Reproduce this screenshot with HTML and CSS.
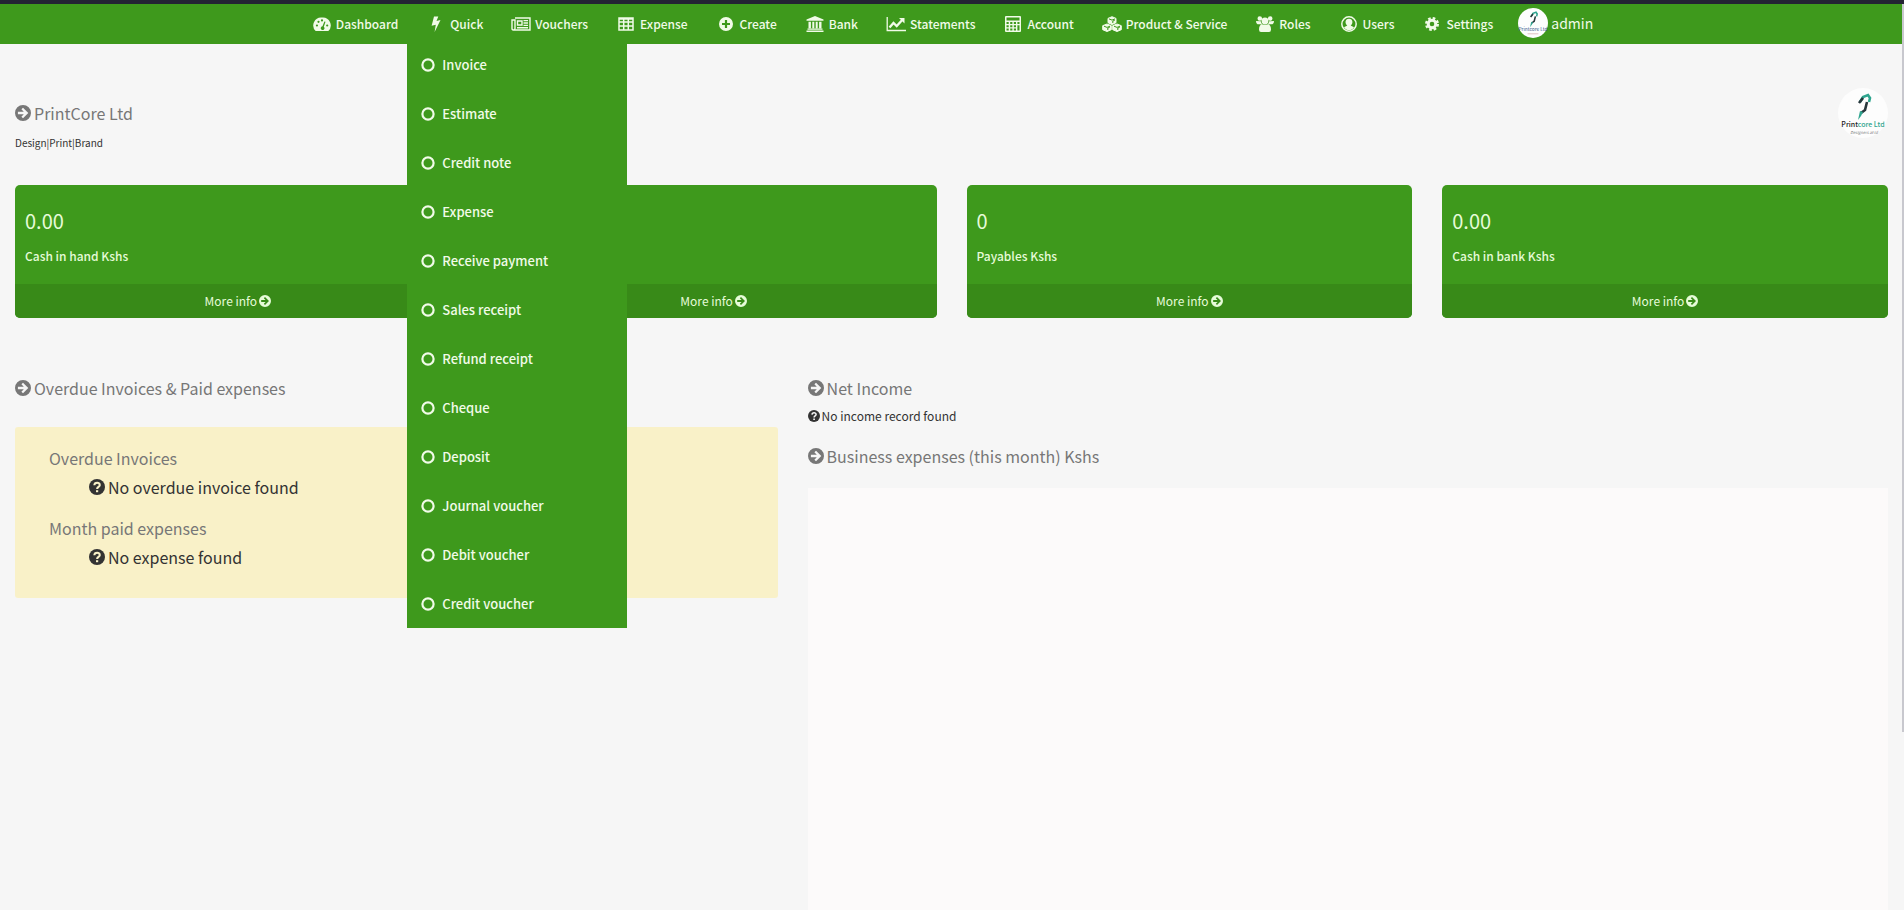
FILE: index.html
```html
<!DOCTYPE html>
<html lang="en">
<head>
<meta charset="utf-8">
<title>PrintCore Ltd</title>
<link rel="stylesheet" href="styles.css">
</head>
<body>
<svg class="defs" aria-hidden="true">
  <symbol id="arrow" viewBox="0 0 16 16"><path fill-rule="evenodd" fill="currentColor" d="M8 0a8 8 0 1 0 0 16A8 8 0 0 0 8 0ZM8 2.7l5.3 5.3L8 13.3 6.4 11.7 8.8 9.2H2.9V6.8h5.9L6.4 4.3Z"/></symbol>
  <symbol id="question" viewBox="0 0 16 16"><circle cx="8" cy="8" r="8" fill="currentColor"/><path d="M5.3 6.2C5.5 3 10.9 3 10.8 6.1 10.7 8 8.1 7.9 8.1 10" fill="none" stroke="var(--hole)" stroke-width="2"/><path d="M7 11.2h2.2v2H7Z" fill="var(--hole)"/></symbol>
  <symbol id="ring" viewBox="0 0 14 14"><circle cx="7" cy="7" r="5.6" fill="none" stroke="currentColor" stroke-width="2.2"/></symbol>
  <symbol id="brand" viewBox="0 0 50 50"><circle cx="25" cy="25" r="25" fill="#fdfdfd"/><path d="M22 14l3-5 5-2 2 3-1 4" fill="none" stroke="#2fa58f" stroke-width="2.6"/><path d="M21 15l4-5M29 14l-2 8-4 3" fill="none" stroke="#27363b" stroke-width="2.6"/><path d="M22 23l-2 9 3-4 2-4Z" fill="#2fa58f"/></symbol>
</svg>
<header class="topbar">
  <nav class="nav" aria-label="Main">
    <a class="nav-item" href="#"><svg class="icon" viewBox="0 0 20 16"><path fill="currentColor" fill-rule="evenodd" d="M3.7 15A7.9 7.9 0 0 1 10 1.500a7.9 7.9 0 0 1 6.300 13.500ZM5 8.4a1.1 1.1 0 1 0-.1 2.2A1.1 1.1 0 0 0 5 8.4ZM6.5 4.7a1.1 1.1 0 1 0 0 2.2 1.1 1.1 0 0 0 0-2.2ZM10 3.3a1.1 1.1 0 1 0 0 2.2 1.1 1.1 0 0 0 0-2.2ZM15.2 8.4a1.1 1.1 0 1 0 0 2.2 1.1 1.1 0 0 0 0-2.2ZM12.4 5.4l-1.9 4.9a1.9 1.9 0 1 0 1.3.4l1.7-4.9Z"/></svg>Dashboard</a>
    <div class="nav-group">
      <a class="nav-item" href="#" aria-expanded="true"><svg class="icon" viewBox="0 0 20 16"><path fill="currentColor" d="M8 .5h4.3L10.5 5l4-.9L8.6 16l1.2-7.3-4.2 1Z"/></svg>Quick</a>
      <div class="dropdown">
        <a class="drop-item" href="#"><svg class="ring"><use href="#ring"/></svg>Invoice</a>
        <a class="drop-item" href="#"><svg class="ring"><use href="#ring"/></svg>Estimate</a>
        <a class="drop-item" href="#"><svg class="ring"><use href="#ring"/></svg>Credit note</a>
        <a class="drop-item" href="#"><svg class="ring"><use href="#ring"/></svg>Expense</a>
        <a class="drop-item" href="#"><svg class="ring"><use href="#ring"/></svg>Receive payment</a>
        <a class="drop-item" href="#"><svg class="ring"><use href="#ring"/></svg>Sales receipt</a>
        <a class="drop-item" href="#"><svg class="ring"><use href="#ring"/></svg>Refund receipt</a>
        <a class="drop-item" href="#"><svg class="ring"><use href="#ring"/></svg>Cheque</a>
        <a class="drop-item" href="#"><svg class="ring"><use href="#ring"/></svg>Deposit</a>
        <a class="drop-item" href="#"><svg class="ring"><use href="#ring"/></svg>Journal voucher</a>
        <a class="drop-item" href="#"><svg class="ring"><use href="#ring"/></svg>Debit voucher</a>
        <a class="drop-item" href="#"><svg class="ring"><use href="#ring"/></svg>Credit voucher</a>
      </div>
    </div>
    <a class="nav-item" href="#"><svg class="icon" viewBox="0 0 20 16"><path fill="none" stroke="currentColor" stroke-width="1.4" d="M4 2h15v12H2.2Q1 14 1 12.5V4h3v8.5Q4 14 2.5 14M6.5 5h4.5v4H6.5ZM12.5 4.6H17M12.5 7H17M12.5 9.4H17M6 11.7h11"/></svg>Vouchers</a>
    <a class="nav-item" href="#"><svg class="icon" viewBox="0 0 20 16"><path fill="none" stroke="currentColor" stroke-width="1.5" d="M3 2h14v12H3ZM3 6h14M3 10h14M7.7 2v12M12.3 2v12M3 3h14"/></svg>Expense</a>
    <a class="nav-item" href="#"><svg class="icon" viewBox="0 0 20 16"><path fill="currentColor" fill-rule="evenodd" d="M10 1a7 7 0 1 0 0 14 7 7 0 0 0 0-14ZM8.9 4h2.2v2.9H14v2.2h-2.9V12H8.9V9.1H6V6.9h2.9Z"/></svg>Create</a>
    <a class="nav-item" href="#"><svg class="icon" viewBox="0 0 20 16"><path fill="currentColor" d="M10 0l8.5 3.5v1.3h-17V3.5ZM3.5 5.7h2.4v6.5H3.5ZM7.3 5.7h2v6.5h-2ZM10.7 5.7h2v6.5h-2ZM14.1 5.7h2.4v6.5h-2.4ZM2.5 12.5h15v1.3h-15ZM1.5 14.5h17V16h-17Z"/></svg>Bank</a>
    <a class="nav-item" href="#"><svg class="icon" viewBox="0 0 20 16"><path fill="none" stroke="currentColor" stroke-width="1.3" d="M1.2 1v13.5H20"/><path fill="none" stroke="currentColor" stroke-width="2.3" d="M3.5 11.5l4-4.5 3.2 3 5.5-6"/><path fill="currentColor" d="M13 2h5.5v5.5Z"/></svg>Statements</a>
    <a class="nav-item" href="#"><svg class="icon" viewBox="0 0 20 16"><path fill="currentColor" fill-rule="evenodd" d="M3 0h14q1 0 1 1v14q0 1-1 1H3q-1 0-1-1V1q0-1 1-1ZM3.5 1.5v3h13v-3ZM3.5 6v2h2.2V6ZM7.2 6v2h2.2V6ZM10.8 6v2H13V6ZM14.4 6v2h2.1V6ZM3.5 9.3v2h2.2v-2ZM7.2 9.3v2h2.2v-2ZM10.8 9.3v2H13v-2ZM14.4 9.3v5.2h2.1V9.3ZM3.5 12.6v1.9h2.2v-1.9ZM7.2 12.6v1.9h2.2v-1.9ZM10.8 12.6v1.9H13v-1.9Z"/></svg>Account</a>
    <a class="nav-item" href="#"><svg class="icon" viewBox="0 0 20 16"><path fill="currentColor" stroke="currentColor" stroke-linejoin="round" d="M10 .7l4 1.7v4.3l-4 1.8-4-1.8V2.4ZM5 8l4.3 1.7v4L5 15.5.7 13.7v-4ZM15 8l4.3 1.7v4L15 15.5l-4.300-1.8v-4Z"/><path class="cut" d="M7 2.9l3 1.2 3-1.2M10.8 7V5l2-.8M2 10.2l3 1.2 3-1.2M5.8 14v-2l2-.8M12 10.2l3 1.2 3-1.2M15.8 14v-2l2-.8"/></svg>Product &amp; Service</a>
    <a class="nav-item" href="#"><svg class="icon" viewBox="0 0 20 16"><path fill="currentColor" d="M2.5 2.5a2.3 2.3 0 1 1 4.6 0 2.3 2.3 0 0 1-4.6 0ZM12.9 2.5a2.3 2.3 0 1 1 4.6 0 2.3 2.3 0 0 1-4.6 0ZM6.6 5a3.4 3.4 0 1 1 6.8 0 3.4 3.4 0 0 1-6.8 0ZM1 5l4.8.3q.2 1.7 1.3 2.9H2.5Q1 8 1 5ZM19 5l-4.8.3q-.2 1.7-1.3 2.9h4.6Q19 8 19 5ZM7 8.2q3 1.6 6 0 3 .7 3 5.3 0 2.5-2 2.5H6q-2 0-2-2.5 0-4.6 3-5.3Z"/></svg>Roles</a>
    <a class="nav-item" href="#"><svg class="icon" viewBox="0 0 20 16"><circle cx="10" cy="8" r="7.2" fill="none" stroke="currentColor" stroke-width="1.5"/><path fill="currentColor" d="M10 2.7c4.3 0 4.2 5.3 1.7 6.7l3.3 1.8c-2 4-8 4-10 0l3.3-1.8C5.8 8 5.7 2.7 10 2.7Z"/></svg>Users</a>
    <a class="nav-item" href="#"><svg class="icon" viewBox="0 0 20 16"><circle cx="10" cy="8" r="3.8" fill="none" stroke="currentColor" stroke-width="3"/><circle cx="10" cy="8" r="5.8" fill="none" stroke="currentColor" stroke-width="2.4" stroke-dasharray="2.6 1.955"/></svg>Settings</a>
    <a class="nav-user" href="#"><svg class="avatar" viewBox="0 0 50 50"><use href="#brand"/><text class="avatar-name" x="25" y="38">Printcore Ltd</text><path d="M16 43h18" stroke="#c99" stroke-width="1"/></svg>admin</a>
  </nav>
</header>
<main class="page">
  <section class="company">
    <div class="company-text">
      <h1 class="heading"><svg class="mark"><use href="#arrow"/></svg>PrintCore Ltd</h1>
      <p class="slogan">Design|Print|Brand</p>
    </div>
    <svg class="logo" viewBox="0 0 50 50" role="img"><use href="#brand"/><text class="logo-name" x="25" y="39"><tspan class="logo-dark">Print</tspan>core Ltd</text><text class="logo-sub" x="26" y="46">Designers at id</text></svg>
  </section>
  <section class="cards">
    <article class="card"><div class="card-body"><h2 class="amount">0.00</h2><p class="label">Cash in hand Kshs</p></div><a class="more" href="#">More info<svg class="mark"><use href="#arrow"/></svg></a></article>
    <article class="card"><div class="card-body"></div><a class="more" href="#">More info<svg class="mark"><use href="#arrow"/></svg></a></article>
    <article class="card"><div class="card-body"><h2 class="amount">0</h2><p class="label">Payables Kshs</p></div><a class="more" href="#">More info<svg class="mark"><use href="#arrow"/></svg></a></article>
    <article class="card"><div class="card-body"><h2 class="amount">0.00</h2><p class="label">Cash in bank Kshs</p></div><a class="more" href="#">More info<svg class="mark"><use href="#arrow"/></svg></a></article>
  </section>
  <div class="columns">
    <section>
      <h2 class="heading"><svg class="mark"><use href="#arrow"/></svg>Overdue Invoices &amp; Paid expenses</h2>
      <div class="notice">
        <h3 class="heading">Overdue Invoices</h3>
        <p class="empty"><svg class="mark"><use href="#question"/></svg>No overdue invoice found</p>
        <h3 class="heading">Month paid expenses</h3>
        <p class="empty"><svg class="mark"><use href="#question"/></svg>No expense found</p>
      </div>
    </section>
    <section class="income">
      <h2 class="heading"><svg class="mark"><use href="#arrow"/></svg>Net Income</h2>
      <p class="record"><svg class="mark"><use href="#question"/></svg>No income record found</p>
      <h2 class="heading"><svg class="mark"><use href="#arrow"/></svg>Business expenses (this month) Kshs</h2>
      <div class="chart"></div>
    </section>
  </div>
</main>
<div class="scroll-thumb"></div>
</body>
</html>
```
FILE: styles.css
```css
:root {
  --green: #3e991c;
  --hole: #f6f6f6;
}

* {
  box-sizing: border-box;
}

body {
  margin: 0;
  height: 100vh;
  overflow: hidden;
  display: flex;
  flex-direction: column;
  background: #f6f6f6;
  color: #333;
  font-family: "Noto Sans CJK SC", "Open Sans", sans-serif;
  font-size: 13px;
  line-height: 20px;
}

h1, h2, h3, p {
  margin: 0;
  font-weight: 400;
}

a {
  color: inherit;
  text-decoration: none;
}

.defs {
  position: absolute;
  width: 0;
  height: 0;
}

.topbar {
  flex: none;
  border-top: 4px solid #232333;
  background: var(--green);
  color: #f1fbe8;
  padding-bottom: 4px;
}

.nav {
  display: flex;
  justify-content: center;
  height: 36px;
}

.nav-item {
  display: flex;
  align-items: center;
  gap: 4px;
  padding: 4px 9px 0 19px;
  height: 36px;
  font-size: 12px;
  font-weight: 500;
  white-space: nowrap;
}

.icon {
  width: 20px;
  height: 16px;
  flex: none;
}

.cut {
  fill: none;
  stroke: var(--green);
}

.nav-group {
  position: relative;
}

.dropdown {
  position: absolute;
  top: 36px;
  left: 0;
  z-index: 2;
  width: 220px;
  background: var(--green);
}

.drop-item {
  display: flex;
  align-items: center;
  gap: 7px;
  height: 49px;
  padding-left: 14px;
  font-weight: 500;
}

.ring {
  width: 14px;
  height: 14px;
}

.nav-user {
  display: flex;
  align-items: center;
  gap: 3px;
  padding: 2px 18px 0 16px;
  font-size: 14px;
}

.avatar {
  width: 30px;
  height: 30px;
}

.avatar-name {
  font-size: 8px;
  text-anchor: middle;
  fill: #34568a;
}

.page {
  flex: 1;
  min-height: 0;
  display: flex;
  flex-direction: column;
  padding: 44px 16px 0 15px;
}

.company {
  display: flex;
  justify-content: space-between;
  padding-bottom: 32px;
}

.company-text {
  padding-top: 13px;
}

.heading {
  display: flex;
  align-items: center;
  gap: 3px;
  font-size: 16px;
  line-height: 24px;
  color: #777;
}

.mark {
  width: 1em;
  height: 1em;
  flex: none;
}

.slogan {
  margin-top: 8px;
  font-size: 10px;
  line-height: 20px;
}

.logo {
  width: 50px;
  height: 50px;
}

.logo-name {
  font-size: 7px;
  font-weight: 500;
  text-anchor: middle;
  fill: #2fa58f;
}

.logo-dark {
  fill: #222;
}

.logo-sub {
  font-size: 4px;
  font-style: italic;
  text-anchor: middle;
  fill: #777;
}

.cards {
  display: grid;
  grid-template-columns: repeat(4, 1fr);
  gap: 30px;
  color: #e6fbd8;
}

.card {
  display: flex;
  flex-direction: column;
  border-radius: 5px;
  overflow: hidden;
  background: var(--green);
}

.card-body {
  flex: 1;
  padding: 21px 10px 18px;
}

.amount {
  font-size: 20px;
  line-height: 30px;
}

.label {
  margin-top: 10px;
  font-size: 12px;
  font-weight: 500;
  line-height: 20px;
}

.more {
  display: flex;
  align-items: center;
  justify-content: center;
  gap: 2px;
  height: 34px;
  background: #388a18;
  font-size: 12px;
}

.columns {
  flex: 1;
  min-height: 0;
  display: grid;
  grid-template-columns: 12fr 17fr;
  gap: 30px;
  padding-top: 58px;
}

.notice {
  --hole: #f9f1c8;
  margin-top: 27px;
  padding: 19px 34px 24px;
  border-radius: 3px;
  background: #f9f1c8;
}

.empty {
  display: flex;
  align-items: center;
  gap: 3px;
  margin-bottom: 12px;
  padding-left: 40px;
  font-size: 16px;
  line-height: 34px;
}

.empty:last-child {
  margin-bottom: 0;
}

.income {
  display: flex;
  flex-direction: column;
}

.record {
  display: flex;
  align-items: center;
  gap: 2px;
  margin: 6px 0 18px;
  font-size: 12px;
}

.chart {
  flex: 1;
  margin-top: 20px;
  background: #fcfafa;
}

.scroll-thumb {
  position: absolute;
  top: 4px;
  right: 0;
  width: 2px;
  height: 80vh;
  background: #c8c8ce;
}
```
